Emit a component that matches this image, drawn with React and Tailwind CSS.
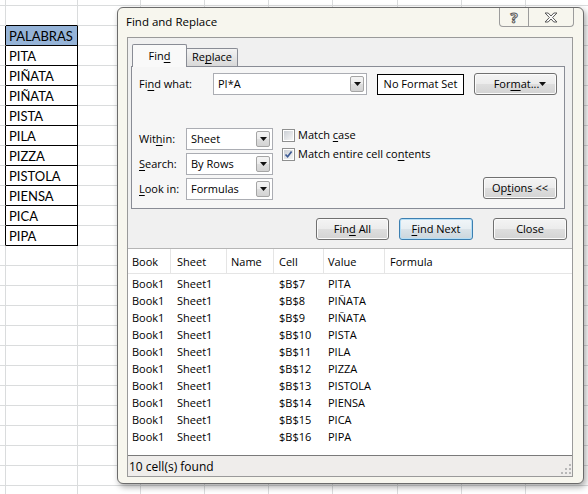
import React from 'react';

const words = ['PITA', 'PIÑATA', 'PIÑATA', 'PISTA', 'PILA', 'PIZZA', 'PISTOLA', 'PIENSA', 'PICA', 'PIPA'];

const colWidths = ['w-[6px]', 'w-[72px]', 'w-[63px]', 'w-[64px]', 'w-[64px]', 'w-[64px]', 'w-[65px]', 'w-[64px]', 'w-[64px]', 'w-[64px]'];

const listCols = [
  { label: 'Book', w: 'w-[43px] pl-[4px]' },
  { label: 'Sheet', w: 'w-[56px] pl-[6px]' },
  { label: 'Name', w: 'w-[47px] pl-[4px]' },
  { label: 'Cell', w: 'w-[50px] pl-[5px]' },
  { label: 'Value', w: 'w-[61px] pl-[4px]' },
  { label: 'Formula', w: 'flex-1 pl-[5px]' },
];

const btnFace = 'bg-[linear-gradient(#f4f4f4_0%,#ececec_48%,#dedede_52%,#d3d3d3_100%)]';

function U({ children }) {
  return <span className="underline decoration-1 underline-offset-[2px]">{children}</span>;
}

function Sheet() {
  const rows = Array.from({ length: 26 }, (_, i) => i);
  return (
    <div className="flex flex-col font-['Lato',sans-serif] text-[13px] text-black">
      {rows.map((r) => (
        <div key={r} className={`flex shrink-0 ${r === 0 ? 'h-[6px]' : 'h-[20px]'}`}>
          {colWidths.map((w, c) => {
            const inTable = r >= 2 && r <= 12;
            let cls = 'border-r border-b border-r-[#dadcdd] border-b-[#dadcdd]';
            if (c === 0 && inTable) cls = 'border-r border-b border-r-black border-b-[#dadcdd]';
            if (c === 1 && r === 1) cls = 'border-r border-b border-r-[#dadcdd] border-b-black';
            if (c === 1 && inTable) cls = 'border-r border-b border-r-black border-b-black';
            let text = '';
            if (c === 1 && r === 2) text = 'PALABRAS';
            if (c === 1 && r > 2 && r <= 12) text = words[r - 3];
            return (
              <div
                key={c}
                className={`${w} h-full shrink-0 ${cls} flex items-center pl-[3px] pt-[2px] leading-none ${
                  c === 1 && r === 2 ? 'bg-[#95b3d7]' : 'bg-white'
                }`}
              >
                {text}
              </div>
            );
          })}
        </div>
      ))}
    </div>
  );
}

function Combo({ value, className = '' }) {
  return (
    <div className={`flex h-[22px] shrink-0 items-stretch border border-[#abadb3] bg-white ${className}`}>
      <div className="flex flex-1 items-center pl-[4px]">{value}</div>
      <div className={`my-[2px] mr-[2px] flex w-[14px] items-center justify-center rounded-[2px] border border-[#a5a5a5] ${btnFace}`}>
        <svg width="7" height="4" viewBox="0 0 7 4">
          <path d="M0 0h7L3.5 4z" fill="#111" />
        </svg>
      </div>
    </div>
  );
}

function Btn({ children, className = '', primary = false }) {
  return (
    <div
      className={`flex h-[22px] shrink-0 items-center justify-center rounded-[3px] border ${
        primary
          ? 'border-[#3c7fb1] shadow-[inset_0_0_0_1px_#b4def6] bg-[linear-gradient(#f1f6f9_0%,#e7eef2_48%,#d9e2e8_52%,#ccd6dc_100%)]'
          : `border-[#707070] shadow-[inset_0_0_0_1px_#fbfbfb] ${btnFace}`
      } ${className}`}
    >
      {children}
    </div>
  );
}

function Check({ checked }) {
  return (
    <div className="flex h-[13px] w-[13px] shrink-0 items-center justify-center border border-[#8e8f8f] bg-white">
      <div className="flex h-[9px] w-[9px] items-center justify-center bg-[linear-gradient(135deg,#cbcfd5,#f6f6f6)]">
        {checked && (
          <svg width="9" height="9" viewBox="0 0 9 9">
            <path d="M1.5 4.5L3.6 6.8L7.6 1.6" fill="none" stroke="#3d5a94" strokeWidth="1.7" />
          </svg>
        )}
      </div>
    </div>
  );
}

function Dialog() {
  const results = words.map((w, i) => ({ cell: `$B$${i + 7}`, value: w }));
  return (
    <div className="absolute left-[117px] top-[7px] flex h-[477px] w-[467px] flex-col rounded-[6px] border border-[#6b6b6b] bg-[#f7f6ee] font-['Open_Sans',sans-serif] text-[11px] text-black shadow-[2px_3px_6px_rgba(0,0,0,0.35)]">
      {/* title bar */}
      <div className="flex h-[29px] shrink-0 items-start">
        <div className="pl-[8px] pt-[6px] text-[11.5px] leading-[16px]">Find and Replace</div>
        <div className="ml-auto mr-[9px] flex h-[19px] w-[75px] rounded-b-[4px] border border-t-0 border-[#9c9c9c]">
          <div className="flex w-[29px] items-center justify-center border-r border-[#9c9c9c] text-[15px] font-bold leading-none text-transparent [-webkit-text-stroke:1px_#5a5a5a]">
            ?
          </div>
          <div className="flex flex-1 items-center justify-center">
            <svg width="14" height="11" viewBox="0 0 14 11">
              <path
                d="M1 1h3.2L7 4l2.8-3H13L8.6 5.5 13 10H9.8L7 7 4.2 10H1l4.4-4.5z"
                fill="#fafafa"
                stroke="#5a5a5a"
                strokeWidth="1"
                strokeLinejoin="round"
              />
            </svg>
          </div>
        </div>
      </div>

      {/* client area */}
      <div className="ml-[9px] mr-[10px] flex flex-1 flex-col border border-[#9a9a9a] bg-[#f0f0f0]">
        {/* tabs */}
        <div className="ml-[4px] mt-[6px] flex h-[22px] items-end">
          <div className="relative z-10 -mb-px flex h-[23px] w-[55px] items-center justify-center rounded-t-[2px] border border-b-0 border-[#898c95] bg-[#f9f9f9]">
            <span>
              Fin<U>d</U>
            </span>
          </div>
          <div className="flex h-[18px] w-[51px] items-center justify-center rounded-tr-[2px] border border-l-0 border-b-0 border-[#898c95] bg-[linear-gradient(#f3f3f3,#d8d8d8)]">
            <span>
              Re<U>p</U>lace
            </span>
          </div>
        </div>

        {/* tab page */}
        <div className="ml-[3px] flex h-[143px] w-[434px] flex-col border border-[#898c95] bg-[#f6f6f6] pl-[7px] pr-[7px] pt-[6px]">
          <div className="flex items-center">
            <div className="w-[74px]">
              Fi<U>n</U>d what:
            </div>
            <Combo value="PI*A" className="w-[154px]" />
            <div className="ml-[10px] flex h-[21px] w-[87px] items-center justify-center border border-black bg-white">
              No Format Set
            </div>
            <Btn className="ml-[10px] w-[83px] justify-between pl-[14px] pr-[5px]">
              <span>
                For<U>m</U>at...
              </span>
              <svg width="7" height="4" viewBox="0 0 7 4">
                <path d="M0 0h7L3.5 4z" fill="#111" />
              </svg>
            </Btn>
          </div>

          <div className="mt-[33px] flex items-end">
            <div className="flex flex-col gap-[3px]">
              <div className="flex items-center">
                <div className="w-[47px]">
                  Wit<U>h</U>in:
                </div>
                <Combo value="Sheet" className="w-[87px]" />
              </div>
              <div className="flex items-center">
                <div className="w-[47px]">
                  <U>S</U>earch:
                </div>
                <Combo value="By Rows" className="w-[87px]" />
              </div>
              <div className="flex items-center">
                <div className="w-[47px]">
                  <U>L</U>ook in:
                </div>
                <Combo value="Formulas" className="w-[87px]" />
              </div>
            </div>
            <div className="ml-[9px] flex flex-col gap-[6px] self-start pt-[1px]">
              <div className="flex h-[13px] items-center gap-[3px]">
                <Check />
                <span>
                  Match <U>c</U>ase
                </span>
              </div>
              <div className="flex h-[13px] items-center gap-[3px]">
                <Check checked />
                <span>
                  Match entire cell co<U>n</U>tents
                </span>
              </div>
            </div>
            <Btn className="mb-[1px] ml-auto w-[74px]">
              <span>
                Op<U>t</U>ions &lt;&lt;
              </span>
            </Btn>
          </div>
        </div>

        {/* action buttons */}
        <div className="mt-[9px] flex justify-end pr-[5px]">
          <Btn className="w-[73px]">
            <span>
              Fin<U>d</U> All
            </span>
          </Btn>
          <Btn primary className="ml-[10px] w-[74px]">
            <span>
              <U>F</U>ind Next
            </span>
          </Btn>
          <Btn className="ml-[20px] w-[74px]">Close</Btn>
        </div>

        {/* results list */}
        <div className="mt-[8px] flex flex-1 flex-col border-t border-[#b5b5b5] bg-white">
          <div className="flex h-[25px] border-b border-[#e5e5e5]">
            {listCols.map((c, i) => (
              <div
                key={c.label}
                className={`${c.w} flex items-center pt-[3px] ${i < listCols.length - 1 ? 'border-r border-[#e5e5e5]' : ''}`}
              >
                {c.label}
              </div>
            ))}
          </div>
          <div className="flex flex-col pt-[2px]">
            {results.map((r) => (
              <div key={r.cell} className="flex h-[17px] items-center">
                <div className="w-[43px] pl-[4px]">Book1</div>
                <div className="w-[56px] pl-[6px]">Sheet1</div>
                <div className="w-[47px]" />
                <div className="w-[50px] pl-[5px]">{r.cell}</div>
                <div className="w-[61px] pl-[4px]">{r.value}</div>
              </div>
            ))}
          </div>
        </div>

        {/* status bar */}
        <div className="flex h-[21px] shrink-0 items-center border-t border-[#7a7a7a] bg-[#efedeb] pl-[1px] pt-[1px] text-[12px]">
          <span>10 cell(s) found</span>
          <svg className="ml-auto mr-[1px] mt-[6px]" width="11" height="11" viewBox="0 0 11 11">
            {[
              [8, 0],
              [8, 4],
              [4, 4],
              [8, 8],
              [4, 8],
              [0, 8],
            ].map(([x, y]) => (
              <rect key={`${x}-${y}`} x={x + 1} y={y} width="2" height="2" fill="#b8b8b8" />
            ))}
          </svg>
        </div>
      </div>
      <div className="h-[6px] shrink-0" />
    </div>
  );
}

export default function App() {
  return (
    <div className="relative h-[494px] w-[588px] overflow-hidden bg-white">
      <Sheet />
      <Dialog />
    </div>
  );
}
